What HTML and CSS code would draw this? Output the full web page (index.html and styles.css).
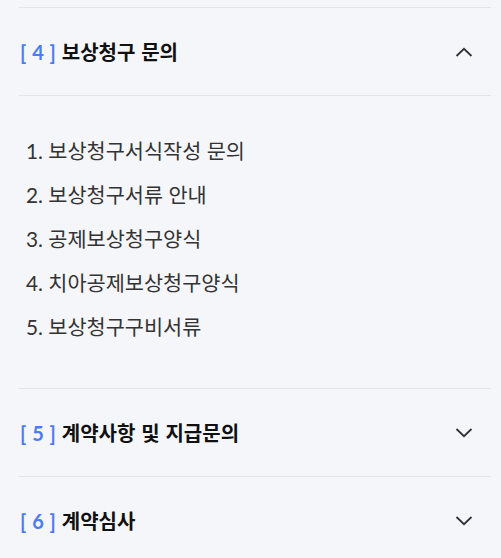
FILE: index.html
```html
<!DOCTYPE html>
<html lang="ko">
<head>
<meta charset="utf-8">
<link rel="stylesheet" href="styles.css">
</head>
<body>
<div class="faq">
  <section class="item open">
    <div class="head">
      <h3 class="title"><span class="num">[ 4 ]</span> 보상청구 문의</h3>
      <svg class="chev" width="18" height="10" viewBox="0 0 18 10"><path d="M1.5 9 L9 1.8 L16.5 9" fill="none" stroke="#333" stroke-width="1.8"/></svg>
    </div>
    <ol class="list">
      <li>1. 보상청구서식작성 문의</li>
      <li>2. 보상청구서류 안내</li>
      <li>3. 공제보상청구양식</li>
      <li>4. 치아공제보상청구양식</li>
      <li>5. 보상청구구비서류</li>
    </ol>
  </section>
  <section class="item">
    <div class="head">
      <h3 class="title"><span class="num">[ 5 ]</span> 계약사항 및 지급문의</h3>
      <svg class="chev" width="18" height="10" viewBox="0 0 18 10"><path d="M1.5 1 L9 8.2 L16.5 1" fill="none" stroke="#333" stroke-width="1.8"/></svg>
    </div>
  </section>
  <section class="item">
    <div class="head">
      <h3 class="title"><span class="num">[ 6 ]</span> 계약심사</h3>
      <svg class="chev" width="18" height="10" viewBox="0 0 18 10"><path d="M1.5 1 L9 8.2 L16.5 1" fill="none" stroke="#333" stroke-width="1.8"/></svg>
    </div>
  </section>
</div>
</body>
</html>
```
FILE: styles.css
```css
html, body {
  margin: 0;
  padding: 0;
  background: #f5f6fa;
}
body {
  font-family: Lato, "Noto Sans CJK KR", sans-serif;
  color: #222;
}
.faq {
  margin: 0 10px 0 19px;
  padding-top: 7px;
}
.item {
  border-top: 1px solid #e2e4e9;
}
.head {
  height: 87px;
  display: flex;
  align-items: center;
  justify-content: space-between;
  padding: 0 18px 0 1px;
}
.title {
  margin: 0;
  font-size: 20px;
  font-weight: 700;
  color: #111;
  word-spacing: 1px;
}
.num {
  color: #4a7cf0;
  word-spacing: 1px;
}
.chev {
  display: block;
}
.list {
  list-style: none;
  margin: 0;
  padding: 33px 0 39px 7px;
  border-top: 1px solid #e2e4e9;
}
.list li {
  font-size: 20.8px;
  line-height: 44px;
  color: #333;
}
```
